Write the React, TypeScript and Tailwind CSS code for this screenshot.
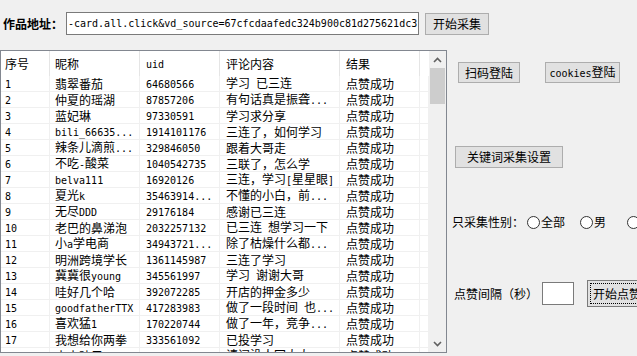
import React from "react";

const rows = [
  ["1", "翡翠番茄", "64680566", "学习 已三连", "点赞成功"],
  ["2", "仲夏的瑶湖", "87857206", "有句话真是振聋...", "点赞成功"],
  ["3", "蓝妃琳", "97330591", "学习求分享", "点赞成功"],
  ["4", "bili_66635...", "1914101176", "三连了，如何学习", "点赞成功"],
  ["5", "辣条儿滴煎...", "329846050", "跟着大哥走", "点赞成功"],
  ["6", "不吃-酸菜", "1040542735", "三联了，怎么学", "点赞成功"],
  ["7", "belva111", "16920126", "三连，学习[星星眼]", "点赞成功"],
  ["8", "夏光k", "35463914...", "不懂的小白，前...", "点赞成功"],
  ["9", "无尽DDD", "29176184", "感谢已三连", "点赞成功"],
  ["10", "老巴的鼻涕泡", "2032257132", "已三连 想学习一下", "点赞成功"],
  ["11", "小a学电商", "34943721...", "除了枯燥什么都...", "点赞成功"],
  ["12", "明洲跨境学长", "1361145987", "三连了学习", "点赞成功"],
  ["13", "冀冀很young", "345561997", "学习 谢谢大哥", "点赞成功"],
  ["14", "哇好几个哈", "392072285", "开店的押金多少", "点赞成功"],
  ["15", "goodfatherTTX", "417283983", "做了一段时间 也...", "点赞成功"],
  ["16", "喜欢猛1", "170220744", "做了一年，竞争...", "点赞成功"],
  ["17", "我想给你两拳", "333561092", "已投学习", "点赞成功"],
  ["18", "小小叶子", "2110398427", "请问没人回大大...", "点赞成功"],
];

const cols = [
  { w: "w-[49px]", pl: "pl-[4px]" },
  { w: "w-[90px]", pl: "pl-[5px]" },
  { w: "w-[80px]", pl: "pl-[6px]" },
  { w: "w-[120px]", pl: "pl-[6px]" },
  { w: "w-[80px]", pl: "pl-[6px]" },
];

// ASCII runs get the narrow monospace look of the original font
function T({ s }: { s: string }) {
  const parts = s.split(/([\x20-\x7e]+)/);
  return (
    <span className="whitespace-pre">
      {parts.map((p, i) =>
        i % 2 === 1 ? (
          <span key={i} className="font-['DejaVu_Sans_Mono'] text-[10px]">
            {p}
          </span>
        ) : (
          <React.Fragment key={i}>{p}</React.Fragment>
        )
      )}
    </span>
  );
}

function Btn({ label, className }: { label: string; className: string }) {
  return (
    <div
      className={`flex items-center justify-center border border-[#adadad] bg-[#e1e1e1] text-[12px] leading-none ${className}`}
    >
      <T s={label} />
    </div>
  );
}

function Radio({ label }: { label: string }) {
  return (
    <div className="flex items-center">
      <span className="h-[13px] w-[13px] rounded-full border border-[#333] bg-white" />
      <span className="ml-[1px]">{label}</span>
    </div>
  );
}

export default function App() {
  return (
    <div className="h-[356px] w-[637px] overflow-hidden bg-[#f0f0f0] font-['Noto_Sans_CJK_SC',sans-serif] text-[12px] leading-none text-black">
      {/* address bar */}
      <div className="flex h-[50px] items-center pb-[3px] pl-[3px]">
        <span className="w-[63px] text-[12px] font-bold">作品地址：</span>
        <div className="flex h-[23px] w-[353px] items-center overflow-hidden whitespace-nowrap border border-[#7a7a7a] bg-white pl-[1px] font-['DejaVu_Sans_Mono'] text-[10px]">
          -card.all.click&vd_source=67cfcdaafedc324b900c81d275621dc3
        </div>
        <Btn label="开始采集" className="ml-[6px] h-[22px] w-[64px]" />
      </div>

      <div className="flex">
        {/* list */}
        <div className="flex h-[303px] w-[447px] shrink-0 overflow-hidden border border-[#828790] bg-white">
          <div className="w-[428px] overflow-hidden">
            <div className="flex h-[25px]">
              {["序号", "昵称", "uid", "评论内容", "结果"].map((h, i) => (
                <div
                  key={h}
                  className={`flex items-center border-r border-[#e5e5e5] ${cols[i].w} ${cols[i].pl}`}
                >
                  <T s={h} />
                </div>
              ))}
              <div className="w-[9px]" />
            </div>
            {rows.map((r) => (
              <div key={r[0]} className="flex h-[16px] border-b border-[#f0f0f0]">
                {r.map((c, i) => (
                  <div
                    key={i}
                    className={`flex items-center whitespace-nowrap border-r border-[#f0f0f0] ${cols[i].w} ${cols[i].pl}`}
                  >
                    <T s={c} />
                  </div>
                ))}
                <div className="w-[9px] border-r border-[#f0f0f0]" />
              </div>
            ))}
          </div>
          {/* scrollbar */}
          <div className="flex w-[17px] flex-col bg-[#f0f0f0]">
            <div className="flex h-[17px] items-center justify-center">
              <svg width="9" height="6" viewBox="0 0 9 6">
                <polyline points="1,5 4.5,1.5 8,5" fill="none" stroke="#606060" strokeWidth="1.6" />
              </svg>
            </div>
            <div className="mx-[1px] h-[36px] bg-[#cdcdcd]" />
            <div className="flex-1" />
            <div className="flex h-[17px] items-center justify-center">
              <svg width="9" height="6" viewBox="0 0 9 6">
                <polyline points="1,1 4.5,4.5 8,1" fill="none" stroke="#606060" strokeWidth="1.6" />
              </svg>
            </div>
          </div>
        </div>

        {/* right panel */}
        <div className="flex flex-1 flex-col">
          <div className="mt-[12px] flex gap-[25px] pl-[11px]">
            <Btn label="扫码登陆" className="h-[21px] w-[62px]" />
            <Btn label="cookies登陆" className="h-[21px] w-[75px]" />
          </div>
          <Btn label="关键词采集设置" className="ml-[8px] mt-[63px] h-[22px] w-[108px]" />
          <div className="mt-[46px] flex h-[16px] items-center whitespace-nowrap pl-[5px]">
            <span className="w-[75px]">只采集性别：</span>
            <Radio label="全部" />
            <div className="ml-[15px]">
              <Radio label="男" />
            </div>
            <div className="ml-[21px]">
              <Radio label="女" />
            </div>
          </div>
          <div className="mt-[50px] flex h-[27px] items-center whitespace-nowrap pl-[7px]">
            <span className="w-[88px]">点赞间隔（秒）</span>
            <div className="h-[23px] w-[32px] shrink-0 border border-[#7a7a7a] bg-white" />
            <div className="ml-[13px] flex h-[27px] w-[70px] shrink-0 items-center border border-[#7a7a7a] bg-[#e1e1e1] p-[2px]">
              <div className="flex h-full w-full items-center border border-dotted border-black pl-[2px]">
                开始点赞
              </div>
            </div>
          </div>
        </div>
      </div>
    </div>
  );
}
